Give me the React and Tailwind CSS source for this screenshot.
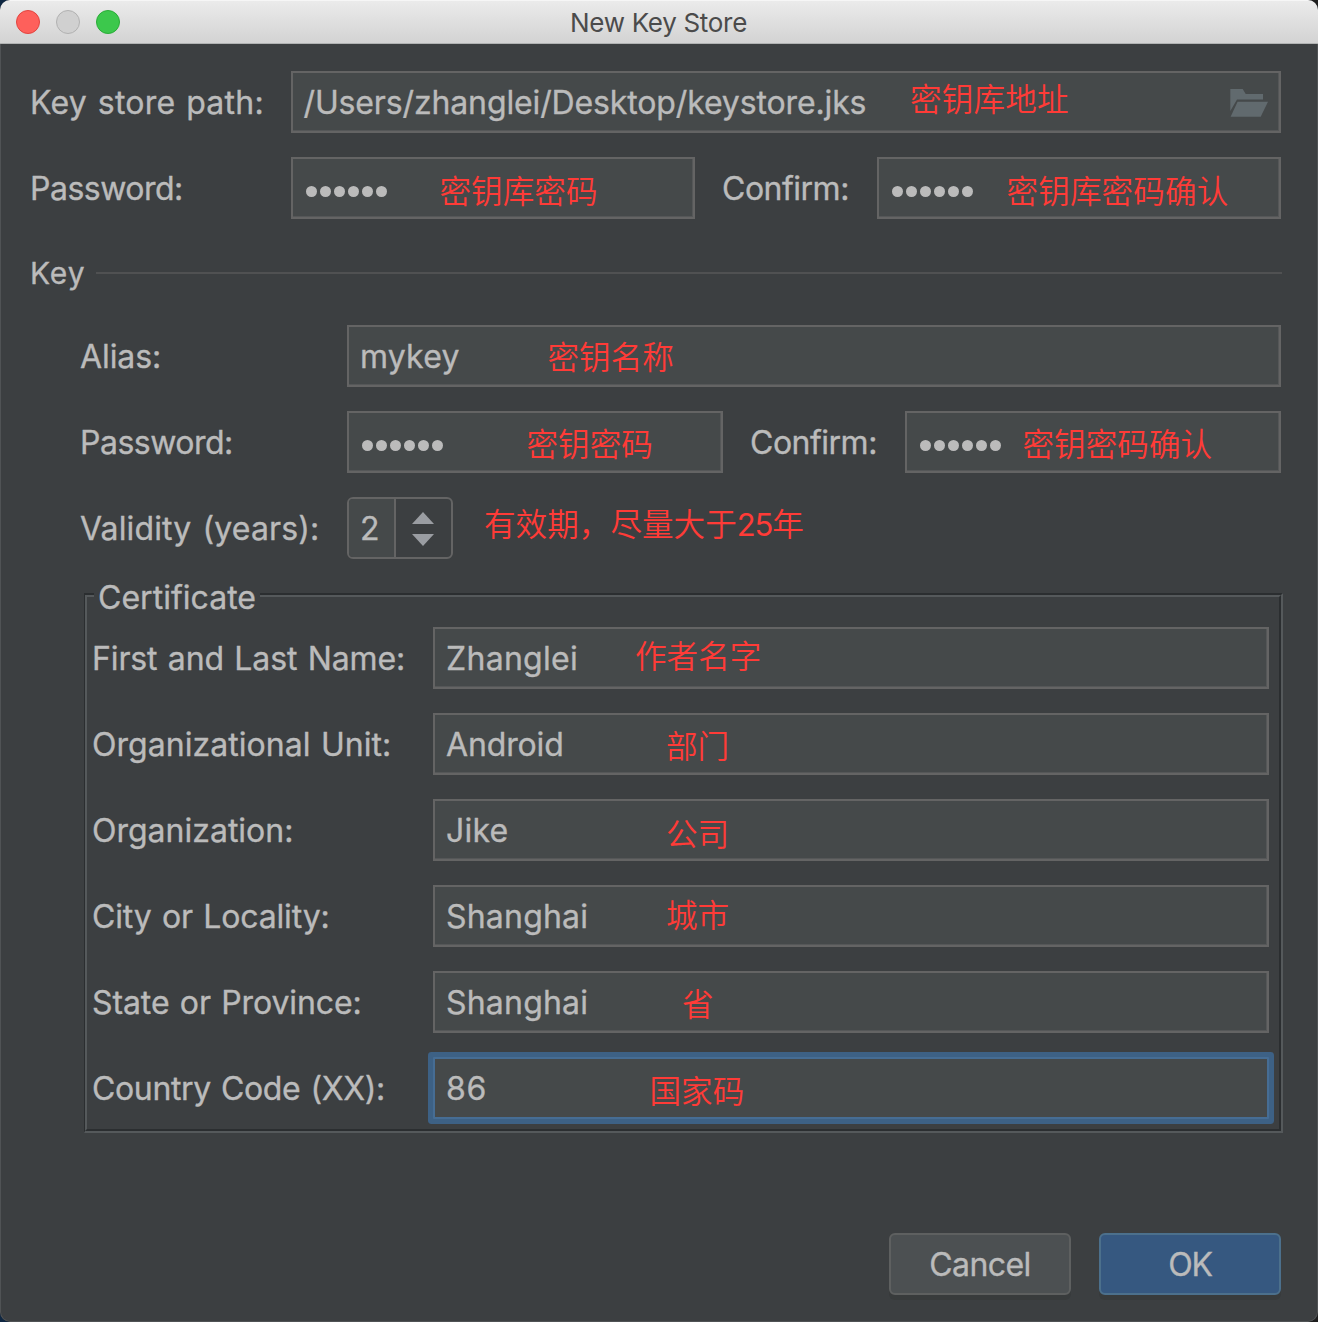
function Dots() {
  return (
    <div className="mt-[5px] flex gap-[3px] pl-[2px]">
      {[0, 1, 2, 3, 4, 5].map((i) => (
        <span key={i} className="h-[11px] w-[11px] rounded-full bg-[#bbbbbb]" />
      ))}
    </div>
  );
}

function Field({ className = "", focused = false, children }) {
  return (
    <div
      className={
        "flex h-[62px] items-center border-2 bg-[#45494a] pt-[2px] pl-[11px] " +
        (focused
          ? "border-[#466d94] shadow-[0_0_0_5px_#3d6185] rounded-[1px] "
          : "border-[#646464] shadow-[inset_-1px_-1px_0_#555758] ") +
        className
      }
    >
      {children}
    </div>
  );
}

function CertRow({ label, labelClass, value, valueClass, focused }) {
  return (
    <div className="flex items-center">
      <div className={"w-[342px] pt-[2px] pl-px " + labelClass}>{label}</div>
      <Field className="w-[836px]" focused={focused}>
        <span className={valueClass}>{value}</span>
      </Field>
    </div>
  );
}

const CERT_ROWS = [
  { label: "First and Last Name:", labelClass: "tracking-[-0.12px] [word-spacing:1.5px]", value: "Zhanglei", valueClass: "tracking-[0.3px]" },
  { label: "Organizational Unit:", labelClass: "tracking-[0.04px] [word-spacing:1.5px]", value: "Android", valueClass: "tracking-[-0.15px]" },
  { label: "Organization:", labelClass: "tracking-[0px]", value: "Jike", valueClass: "tracking-[0.2px]" },
  { label: "City or Locality:", labelClass: "tracking-[-0.15px] [word-spacing:1.5px]", value: "Shanghai", valueClass: "tracking-[0.2px]" },
  { label: "State or Province:", labelClass: "tracking-[-0.1px] [word-spacing:1.5px]", value: "Shanghai", valueClass: "tracking-[0.2px]" },
  { label: "Country Code (XX):", labelClass: "tracking-[-0.36px] [word-spacing:1.5px]", value: "86", valueClass: "tracking-[0.8px]", focused: true },
];

function Note({ className, children }) {
  return <div className={"absolute whitespace-nowrap " + className}>{children}</div>;
}

function Notes() {
  return (
    <div className="pointer-events-none absolute inset-0 font-['Noto_Sans_CJK_SC',sans-serif] text-[31.6px] leading-[32px] font-[350] text-[#ff3b37]">
      <Note className="left-[910px] top-[81px] tracking-[0.15px]">密钥库地址</Note>
      <Note className="left-[439.5px] top-[173px]">密钥库密码</Note>
      <Note className="left-[1006.5px] top-[173px] tracking-[0.1px]">密钥库密码确认</Note>
      <Note className="left-[547.5px] top-[339px]">密钥名称</Note>
      <Note className="left-[526.5px] top-[426px]">密钥密码</Note>
      <Note className="left-[1022.5px] top-[426px]">密钥密码确认</Note>
      <Note className="left-[484px] top-[506px]">
        有效期，尽量大于<span className="font-['Inter'] text-[31px] font-normal tracking-[-1.2px]">25</span>年
      </Note>
      <Note className="left-[635px] top-[638px]">作者名字</Note>
      <Note className="left-[666px] top-[728px]">部门</Note>
      <Note className="left-[666px] top-[816px]">公司</Note>
      <Note className="left-[666px] top-[897px]">城市</Note>
      <Note className="left-[682px] top-[986px]">省</Note>
      <Note className="left-[649.5px] top-[1073px]">国家码</Note>
    </div>
  );
}

export default function App() {
  return (
    <div className="h-[1322px] w-[1318px] overflow-hidden bg-[linear-gradient(90deg,#0f2742_50%,#1e1e1e_50%)]">
      <div className="relative flex h-[1322px] w-[1318px] flex-col overflow-hidden rounded-[10px] bg-[#3c3f41] font-['Inter',sans-serif] text-[32px] leading-[40px] whitespace-nowrap text-[#bbbbbb]">
        <div className="flex h-[44px] shrink-0 items-center border-t border-b border-t-[#f6f6f6] border-b-[#b1b3b3] bg-linear-to-b from-[#ebebeb] to-[#d3d3d3] pl-4">
          <div className="flex w-[200px] gap-4">
            <span className="h-6 w-6 rounded-full border border-[#e2443f] bg-[#fe605b]" />
            <span className="h-6 w-6 rounded-full border border-[#b1b1b1] bg-[#d0d0d0]" />
            <span className="h-6 w-6 rounded-full border border-[#2aac38] bg-[#3cc84c]" />
          </div>
          <div className="mt-[2px] flex-1 pr-[217px] text-center text-[26px] leading-[32px] tracking-[-0.3px] text-[#4b4b4b]">New Key Store</div>
        </div>

        <div className="flex flex-1 flex-col rounded-b-[10px] border-x border-b border-[#505355] pt-[27px] pr-[35px] pl-[28px] [-webkit-text-stroke:0.35px_#bbbbbb]">
          <div className="flex items-center">
            <div className="w-[262px] pt-[2px] pl-px tracking-[0.25px] [word-spacing:1.5px]">Key store path:</div>
            <Field className="w-[990px] justify-between pr-[11px]">
              <span className="ml-[-0.5px] tracking-[-0.13px]">/Users/zhanglei/Desktop/keystore.jks</span>
              <svg width="38" height="28" viewBox="0 0 38 28" fill="#616a6e">
                <path d="M0.3 0H12.7L15.7 5H33V10.4H7L0.3 22Z" />
                <path d="M7.6 12.7H38L30.7 27.8H0.6Z" />
              </svg>
            </Field>
          </div>
          <div className="mt-6 flex items-center">
            <div className="w-[262px] pt-[2px] pl-px tracking-[-0.5px]">Password:</div>
            <Field className="w-[404px]"><Dots /></Field>
            <div className="w-[182px] pt-[2px] pl-[27px] tracking-[-0.5px]">Confirm:</div>
            <Field className="w-[404px]"><Dots /></Field>
          </div>

          <div className="mt-[34px] flex h-[40px] items-center">
            <div className="w-[67px] pl-px text-[30px] tracking-[0.9px]">Key</div>
            <div className="h-[2px] w-[1186px] bg-[#505152]" />
          </div>

          <div className="mt-[32px] ml-[51px] flex items-center">
            <div className="w-[267px] pt-[2px] tracking-[-0.1px]">Alias:</div>
            <Field className="w-[934px] tracking-[0.2px]">mykey</Field>
          </div>
          <div className="mt-6 ml-[51px] flex items-center">
            <div className="w-[267px] pt-[2px] tracking-[-0.5px]">Password:</div>
            <Field className="w-[376px]"><Dots /></Field>
            <div className="w-[182px] pt-[2px] pl-[27px] tracking-[-0.5px]">Confirm:</div>
            <Field className="w-[376px]"><Dots /></Field>
          </div>
          <div className="mt-6 ml-[51px] flex items-center">
            <div className="w-[267px] pt-[2px] tracking-[0.13px] [word-spacing:2px]">Validity (years):</div>
            <div className="flex h-[62px] w-[106px] overflow-hidden rounded-[6px] border-2 border-[#646464]">
              <div className="flex w-[47px] items-center border-r-2 border-[#646464] bg-[#45494a] pt-[2px] pl-[11px]">2</div>
              <div className="flex flex-1 flex-col items-center justify-center gap-[10px] pt-[2px] pr-px">
                <svg width="22" height="12" viewBox="0 0 22 12" fill="#9a9da2"><path d="M0 12L11 0L22 12Z" /></svg>
                <svg width="22" height="12" viewBox="0 0 22 12" fill="#9a9da2"><path d="M0 0H22L11 12Z" /></svg>
              </div>
            </div>
          </div>

          <div className="relative mt-[34px] ml-[55px] h-[540px] w-[1199px] border-2 border-l border-t-[#2b2e30] border-r-[#55595b] border-b-[#55595b] border-l-[#2b2e30]">
            <div className="h-full border-2 border-t-[#55595b] border-r-[#2b2e30] border-b-[#2b2e30] border-l-[#55595b]">
              <div className="flex flex-col gap-6 pt-[30px] pl-[4px]">
                {CERT_ROWS.map((row) => (
                  <CertRow key={row.label} {...row} />
                ))}
              </div>
            </div>
            <div className="absolute top-[-17px] left-[9px] w-[166px] bg-[#3c3f41] pl-[4px] tracking-[0.02px]">Certificate</div>
          </div>

          <div className="mt-[100px] mr-px flex justify-end gap-[28px] text-center">
            <div className="h-[62px] w-[182px] rounded-[6px] border-2 border-[#5e6060] bg-[#4c5052] pt-[10px] tracking-[-0.6px] shadow-[0_5px_0_#383b3c]">Cancel</div>
            <div className="h-[62px] w-[182px] rounded-[6px] border-2 border-[#4c708c] bg-[#365880] pt-[10px] tracking-[-1.2px] shadow-[0_5px_0_#383b3c]">OK</div>
          </div>
        </div>
        <Notes />
      </div>
    </div>
  );
}
